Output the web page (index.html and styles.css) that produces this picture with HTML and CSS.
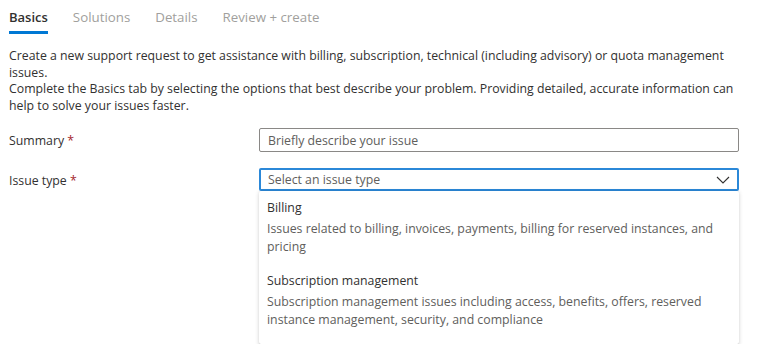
FILE: index.html
```html
<!DOCTYPE html>
<html lang="en">
  <head>
    <meta charset="UTF-8" />
    <title>New support request</title>
    <link rel="stylesheet" href="styles.css">
  </head>
  <body>
    <!-- tabs -->
    <div class="tabs">
      <div class="tab active">Basics</div>
      <div class="tab">Solutions</div>
      <div class="tab">Details</div>
      <div class="tab">Review + create</div>
    </div>

    <div class="intro">
      <p>
        Create a new support request to get assistance with billing, subscription, technical (including advisory) or quota management
        issues.
      </p>
      <p>
        Complete the Basics tab by selecting the options that best describe your problem. Providing detailed, accurate information can
        help to solve your issues faster.
      </p>
    </div>

    <div class="form-row">
      <label>Summary <span class="req">*</span></label>
      <div class="field">
        <div class="input">Briefly describe your issue</div>
      </div>
    </div>

    <div class="form-row">
      <label>Issue type <span class="req">*</span></label>
      <div class="field">
        <div class="select">
          <span>Select an issue type</span>
          <svg width="14" height="8" viewBox="0 0 14 8">
            <path d="M1 1l6 6 6-6" fill="none" stroke="#323130" stroke-width="1.1" />
          </svg>
        </div>
        <div class="dropdown">
          <div class="option">
            <div class="option-title">Billing</div>
            <div class="option-desc">Issues related to billing, invoices, payments, billing for reserved instances, and pricing</div>
          </div>
          <div class="option">
            <div class="option-title">Subscription management</div>
            <div class="option-desc">Subscription management issues including access, benefits, offers, reserved instance management, security, and compliance</div>
          </div>
        </div>
      </div>
    </div>
  </body>
</html>
```

FILE: styles.css
```css
* {
  margin: 0;
  padding: 0;
  box-sizing: border-box;
}
body {
  font-family: "Open Sans", sans-serif;
  font-size: 12.3px;
  color: #323130;
  background: #fff;
  padding: 0 9px;
}
.tabs {
  display: flex;
  gap: 25px;
  height: 34px;
}
.tab {
  font-size: 13.3px;
  color: #a19f9d;
  padding-top: 8px;
  height: 34px;
}
.tab.active {
  color: #323130;
  font-weight: 600;
  font-size: 13px;
  border-bottom: 3px solid #0078d4;
}
.intro {
  margin-top: 14px;
  line-height: 16.5px;
  width: 735px;
}
.form-row {
  display: flex;
  margin-top: 14px;
}
.form-row + .form-row {
  margin-top: 16px;
}
label {
  width: 250px;
  padding-top: 4px;
}
.req {
  color: #a4262c;
}
.field {
  width: 480px;
}
.input {
  height: 24px;
  border: 1px solid #8a8886;
  border-radius: 2px;
  padding: 3px 8px;
  color: #605e5c;
}
.select {
  height: 23px;
  border: 2px solid #2b88d8;
  border-radius: 2px;
  padding: 2px 7px;
  color: #605e5c;
  display: flex;
  justify-content: space-between;
  align-items: center;
}
.dropdown {
  background: #fff;
  box-shadow: 0 1.6px 4px rgba(0, 0, 0, 0.18), 0 0.3px 1px rgba(0, 0, 0, 0.1);
  border-radius: 2px;
  padding: 8px 0 5px;
}
.option {
  padding: 0 8px 10px;
  line-height: 18px;
}
.option + .option {
  padding-top: 6px;
}
.option-title {
  color: #323130;
}
.option-desc {
  color: #605e5c;
  margin-top: 3px;
}
```
